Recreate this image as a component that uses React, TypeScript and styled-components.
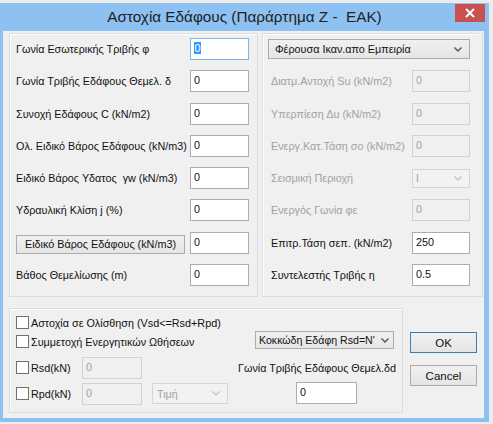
import React from 'react';
import styled, { createGlobalStyle } from 'styled-components';

const GlobalStyle = createGlobalStyle`
  html, body {
    margin: 0;
    padding: 0;
    background: #ececec;
  }
  body {
    font-family: "Liberation Sans", Arial, sans-serif;
    font-size: 10.8px;
    color: #111;
  }
`;

const frame = '#8cc1f1';

const Window = styled.div`
  margin-top: 3px;
  width: 489px;
  height: 419px;
  background: ${frame};
  display: flex;
  flex-direction: column;
  box-sizing: border-box;
`;

const TitleBar = styled.div`
  height: 28px;
  display: flex;
  align-items: flex-start;
  padding-left: 34px;
  box-sizing: border-box;
`;

const Title = styled.div`
  flex: 1;
  text-align: center;
  white-space: pre;
  font-size: 15.3px;
  line-height: 28px;
  color: #222;
`;

const CloseButton = styled.div`
  width: 30px;
  height: 18px;
  margin: 1px 4px 0 0;
  background: #c75050;
  display: flex;
  align-items: center;
  justify-content: center;
`;

const Client = styled.div`
  flex: 1;
  margin: 0 5px 4px 3px;
  background: #f0f0f0;
  display: flex;
  flex-direction: column;
`;

const TopRow = styled.div`
  display: flex;
  gap: 4px;
  margin: 2px 0 0 6px;
`;

const Group = styled.div<{ $w: number; $h: number }>`
  width: ${p => p.$w}px;
  height: ${p => p.$h}px;
  box-sizing: border-box;
  border: 1px solid #dcdcdc;
  box-shadow: inset 1px 1px 0 #fff;
`;

const FieldGrid = styled(Group)<{ $pl: number; $pr: number; $col: number }>`
  display: grid;
  grid-template-columns: minmax(0, 1fr) ${p => p.$col}px;
  grid-auto-rows: 22px;
  row-gap: 10.3px;
  align-items: center;
  padding: 4px ${p => p.$pr}px 0 ${p => p.$pl}px;
`;

const Label = styled.div<{ $off?: boolean; $indent?: number }>`
  white-space: pre;
  color: ${p => (p.$off ? '#a2a2a2' : '#111')};
  padding-left: ${p => p.$indent ?? 0}px;
  line-height: 14px;
`;

const TextBox = styled.div<{ $off?: boolean; $focus?: boolean; $w?: number }>`
  height: 22px;
  width: ${p => (p.$w ? `${p.$w}px` : 'auto')};
  box-sizing: border-box;
  border: 1px solid ${p => (p.$focus ? '#7eb4ea' : p.$off ? '#d2d2d2' : '#abadb3')};
  background: ${p => (p.$off ? '#f0f0f0' : '#fff')};
  color: ${p => (p.$off ? '#a2a2a2' : '#111')};
  padding: 2px 3px 0 3px;
  line-height: 14px;
  white-space: nowrap;
`;

const Selected = styled.span`
  background: #3399ff;
  color: #fff;
  padding: 0 0.5px;
`;

const Combo = styled.div<{ $off?: boolean; $h: number; $w?: number; $pad: number }>`
  height: ${p => p.$h}px;
  width: ${p => (p.$w ? `${p.$w}px` : 'auto')};
  box-sizing: border-box;
  border: 1px solid ${p => (p.$off ? '#d5d5d5' : '#acacac')};
  background: ${p => (p.$off ? '#f2f2f2' : 'linear-gradient(#f0f0f0, #e5e5e5)')};
  color: ${p => (p.$off ? '#a2a2a2' : '#111')};
  display: flex;
  align-items: center;
  padding: 0 7px 0 ${p => p.$pad}px;
  gap: 4px;
  span {
    flex: 1;
    overflow: hidden;
    white-space: nowrap;
  }
`;

const WideCombo = styled(Combo)`
  grid-column: 1 / -1;
  align-self: start;
  margin-top: 1px;
`;

const PushButton = styled.div<{ $default?: boolean; $w: number; $h: number }>`
  width: ${p => p.$w}px;
  height: ${p => p.$h}px;
  box-sizing: border-box;
  border: 1px solid ${p => (p.$default ? '#3c7fb1' : '#acacac')};
  background: linear-gradient(#f0f0f0, #e5e5e5);
  display: flex;
  align-items: center;
  justify-content: center;
  white-space: nowrap;
  font-size: 11.5px;
`;

const LeftButton = styled(PushButton)`
  margin-top: 3px;
  font-size: 10.8px;
`;

const BottomRow = styled.div`
  display: flex;
  margin: 11px 0 0 6px;
`;

const OptionsGroup = styled(Group)`
  display: flex;
  padding: 4px 6px 0 6px;
`;

const CheckColumn = styled.div`
  display: flex;
  flex-direction: column;
`;

const CheckRow = styled.div<{ $h: number; $mt?: number }>`
  display: flex;
  align-items: center;
  height: ${p => p.$h}px;
  margin-top: ${p => p.$mt ?? 0}px;
`;

const Box = styled.div`
  width: 13px;
  height: 13px;
  box-sizing: border-box;
  border: 1px solid #707070;
  background: #fff;
  margin-right: 2px;
  flex: none;
`;

const CheckText = styled.div<{ $w?: number }>`
  white-space: nowrap;
  width: ${p => (p.$w ? `${p.$w}px` : 'auto')};
`;

const SideCombo = styled(Combo)`
  margin-left: 10px;
`;

const RightColumn = styled.div`
  margin-left: auto;
  display: flex;
  flex-direction: column;
  align-items: flex-end;
`;

const FrictionCombo = styled(Combo)`
  margin: 18px 2px 0 0;
  padding-right: 4px;
  gap: 2px;
  font-size: 10.6px;
`;

const FrictionLabel = styled(Label)`
  margin-top: 12px;
`;

const FrictionBox = styled(TextBox)`
  margin: 7px 39px 0 0;
`;

const ButtonColumn = styled.div`
  display: flex;
  flex-direction: column;
  gap: 12px;
  margin: 24px 0 0 7px;
`;

function Chevron({ off }: { off?: boolean }) {
  return (
    <svg width="8" height="5" viewBox="0 0 8 5">
      <path d="M0.5 0.5 L4 4 L7.5 0.5" fill="none" stroke={off ? '#c4c4c4' : '#555'} strokeWidth="1.4" />
    </svg>
  );
}

const leftRows = [
  'Γωνία Τριβής Εδάφους Θεμελ. δ',
  'Συνοχή Εδάφους C (kN/m2)',
  'Ολ. Ειδικό Βάρος Εδάφους (kN/m3)',
  'Ειδικό Βάρος Υδατος  γw (kN/m3)',
  'Υδραυλική Κλίση j (%)',
];

export default function App(): JSX.Element {
  return (
    <>
      <GlobalStyle />
      <Window>
        <TitleBar>
          <Title>Αστοχία Εδάφους (Παράρτημα Ζ -  ΕΑΚ)</Title>
          <CloseButton>
            <svg width="10" height="10" viewBox="0 0 10 10">
              <path d="M1 1 L9 9 M9 1 L1 9" stroke="#fff" strokeWidth="2" />
            </svg>
          </CloseButton>
        </TitleBar>
        <Client>
          <TopRow>
            <FieldGrid $w={249} $h={264} $pl={6} $pr={8} $col={59}>
              <Label>Γωνία Εσωτερικής Τριβής φ</Label>
              <TextBox $focus><Selected>0</Selected></TextBox>
              {leftRows.map(t => (
                <React.Fragment key={t}>
                  <Label>{t}</Label>
                  <TextBox>0</TextBox>
                </React.Fragment>
              ))}
              <LeftButton $w={169} $h={19}>Ειδικό Βάρος Εδάφους (kN/m3)</LeftButton>
              <TextBox>0</TextBox>
              <Label>Βάθος Θεμελίωσης (m)</Label>
              <TextBox>0</TextBox>
            </FieldGrid>
            <FieldGrid $w={221} $h={264} $pl={5} $pr={12} $col={58}>
              <WideCombo $h={20} $pad={6}>
                <span>Φέρουσα Ικαν.απο Εμπειρία</span>
                <Chevron />
              </WideCombo>
              <Label $off $indent={3}>Διατμ.Αντοχή Su (kN/m2)</Label>
              <TextBox $off>0</TextBox>
              <Label $off $indent={3}>Υπερπίεση Δu (kN/m2)</Label>
              <TextBox $off>0</TextBox>
              <Label $off $indent={3}>Ενεργ.Κατ.Τάση σο (kN/m2)</Label>
              <TextBox $off>0</TextBox>
              <Label $off $indent={3}>Σεισμική Περιοχή</Label>
              <Combo $off $h={19} $pad={3}>
                <span>I</span>
                <Chevron off />
              </Combo>
              <Label $off $indent={3}>Ενεργός Γωνία φε</Label>
              <TextBox $off>0</TextBox>
              <Label $indent={3}>Επιτρ.Τάση σεπ. (kN/m2)</Label>
              <TextBox>250</TextBox>
              <Label $indent={3}>Συντελεστής Τριβής η</Label>
              <TextBox>0.5</TextBox>
            </FieldGrid>
          </TopRow>
          <BottomRow>
            <OptionsGroup $w={394} $h={105}>
              <CheckColumn>
                <CheckRow $h={19}>
                  <Box />
                  <CheckText>Αστοχία σε Ολίσθηση (Vsd&lt;=Rsd+Rpd)</CheckText>
                </CheckRow>
                <CheckRow $h={19}>
                  <Box />
                  <CheckText>Συμμετοχή Ενεργητικών Ωθήσεων</CheckText>
                </CheckRow>
                <CheckRow $h={21} $mt={6}>
                  <Box />
                  <CheckText $w={51}>Rsd(kN)</CheckText>
                  <TextBox $off $w={60}>0</TextBox>
                </CheckRow>
                <CheckRow $h={21} $mt={5}>
                  <Box />
                  <CheckText $w={51}>Rpd(kN)</CheckText>
                  <TextBox $off $w={60}>0</TextBox>
                  <SideCombo $off $h={21} $w={76} $pad={4}>
                    <span>Τιμή</span>
                    <Chevron off />
                  </SideCombo>
                </CheckRow>
              </CheckColumn>
              <RightColumn>
                <FrictionCombo $h={18} $w={139} $pad={3}>
                  <span>Κοκκώδη Εδάφη Rsd=N'</span>
                  <Chevron />
                </FrictionCombo>
                <FrictionLabel>Γωνία Τριβής Εδάφους Θεμελ.δd</FrictionLabel>
                <FrictionBox $w={61}>0</FrictionBox>
              </RightColumn>
            </OptionsGroup>
            <ButtonColumn>
              <PushButton $default $w={67} $h={21}>OK</PushButton>
              <PushButton $w={67} $h={21}>Cancel</PushButton>
            </ButtonColumn>
          </BottomRow>
        </Client>
      </Window>
    </>
  );
}
